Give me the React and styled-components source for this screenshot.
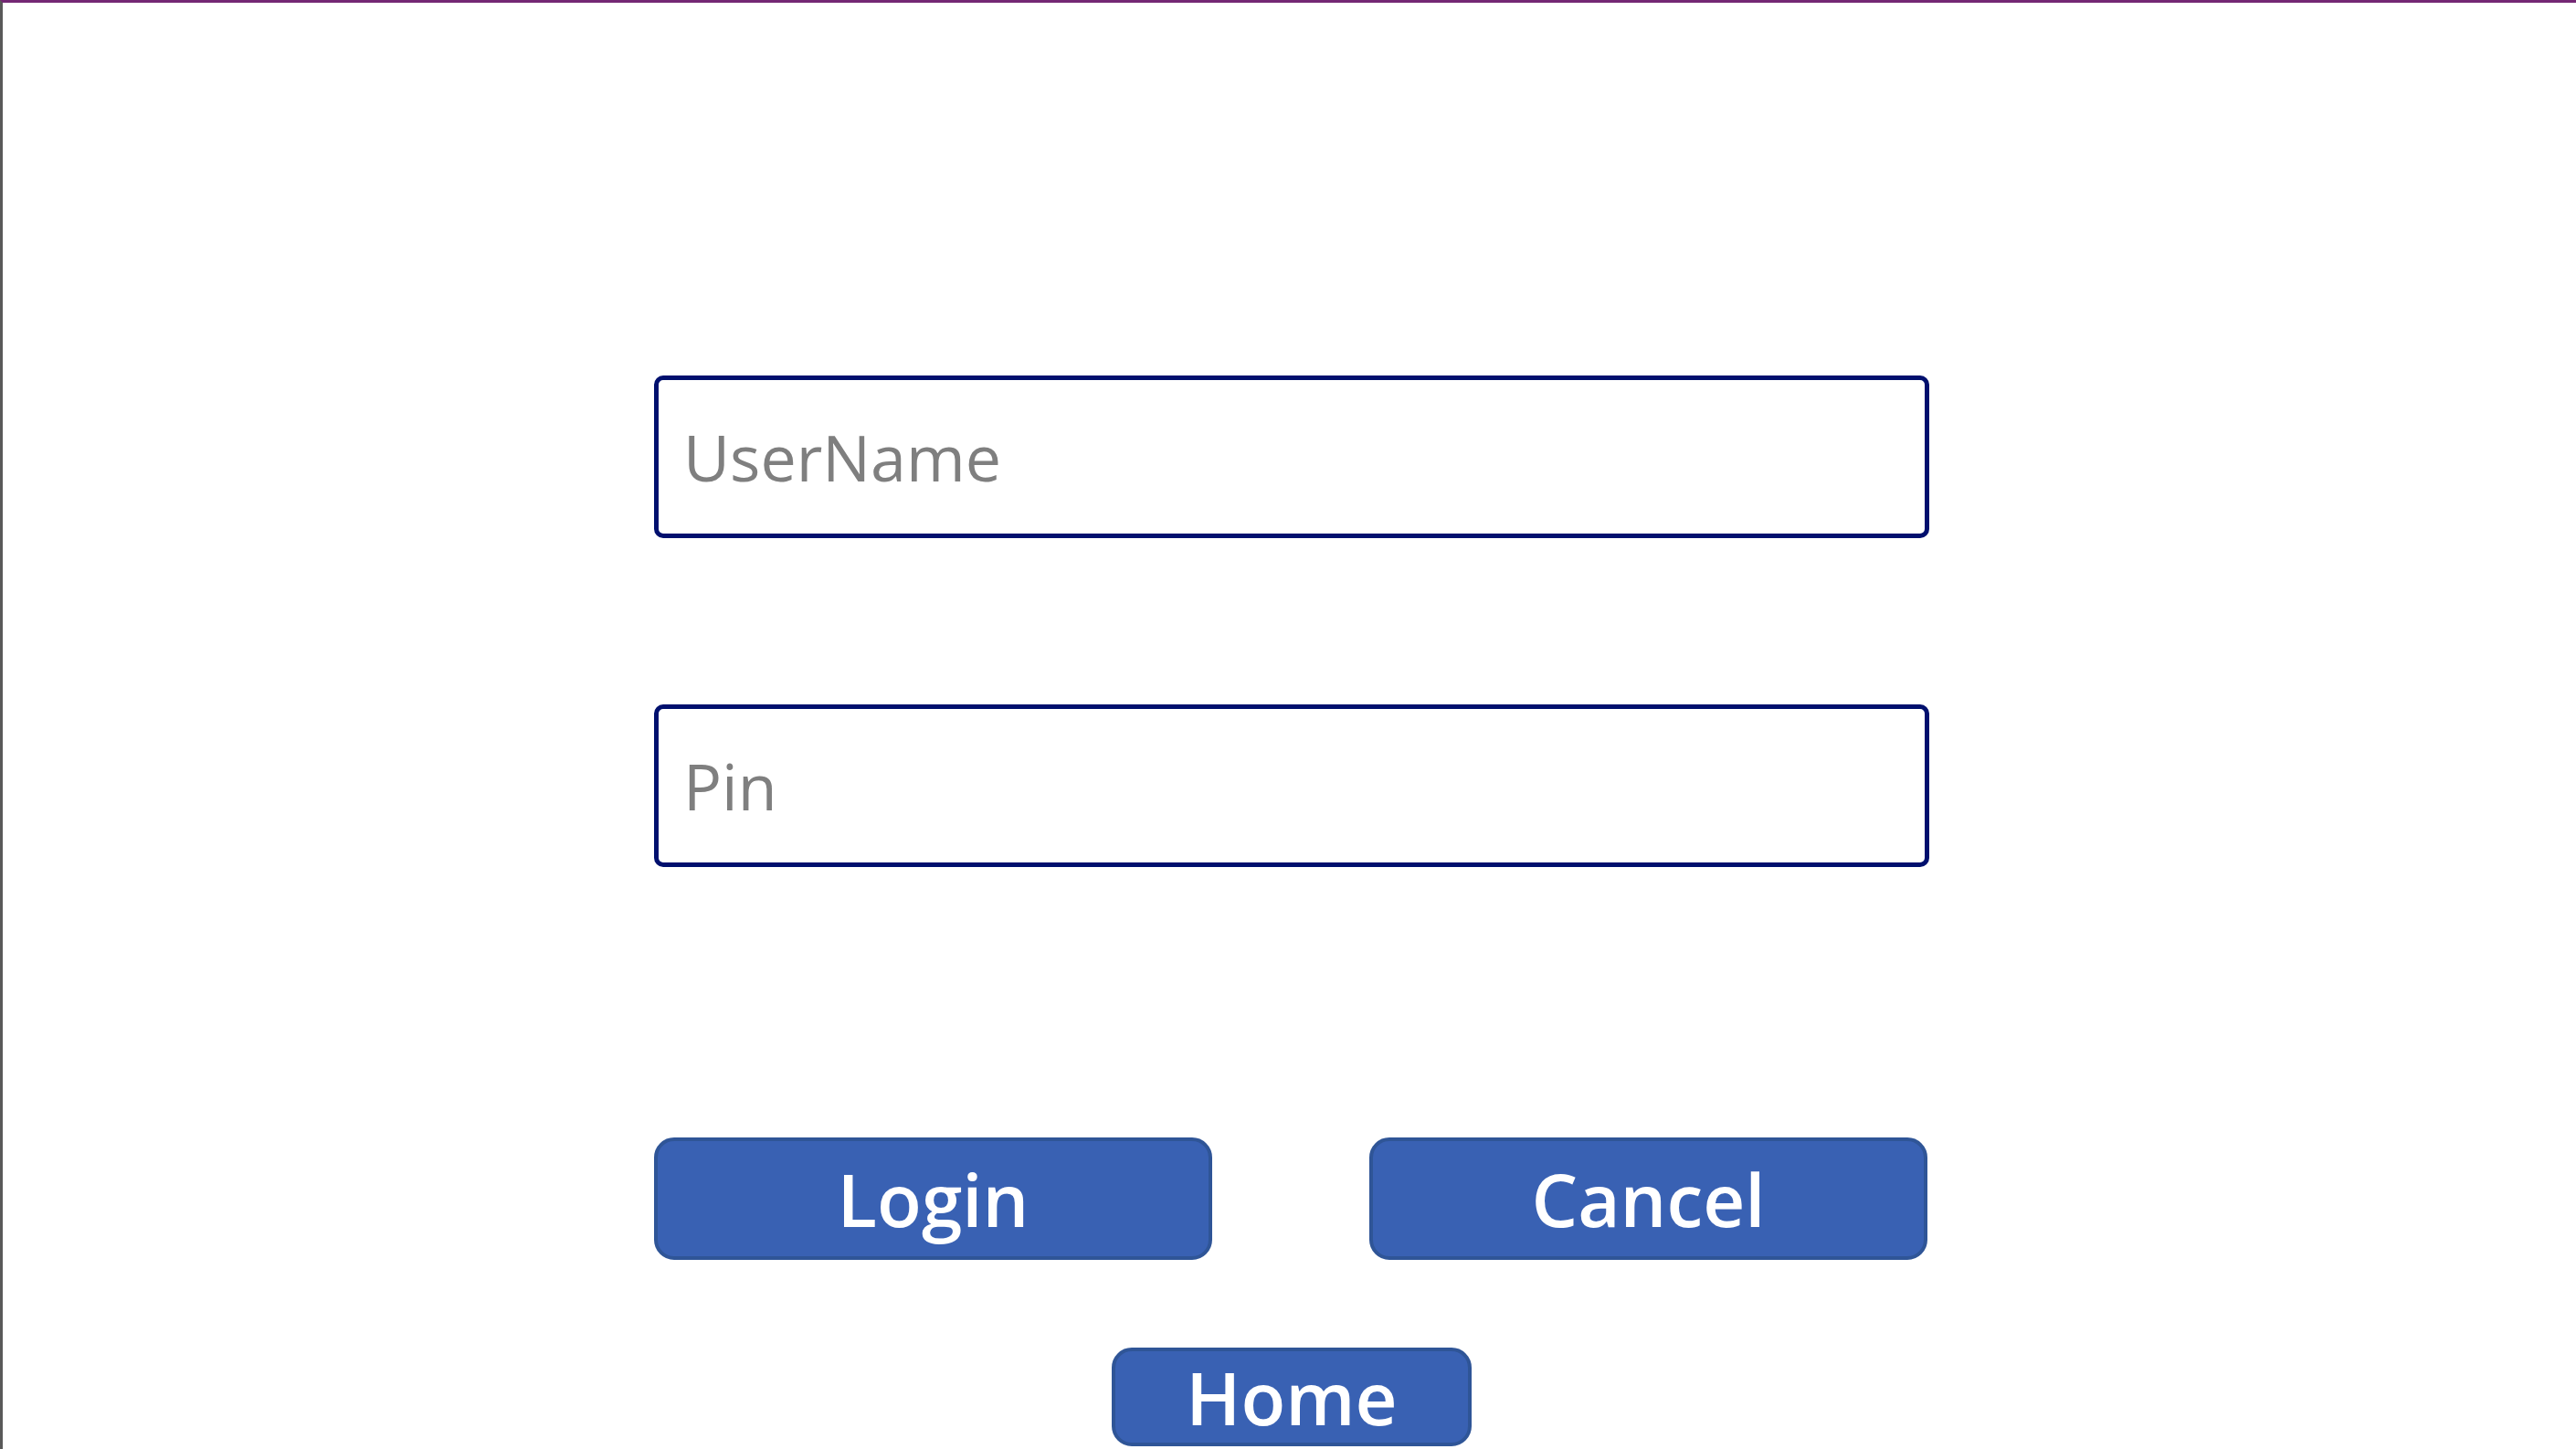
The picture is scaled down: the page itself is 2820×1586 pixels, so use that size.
import React from "react";
import styled, { createGlobalStyle } from "styled-components";

const GlobalStyle = createGlobalStyle`
  html, body {
    margin: 0;
    padding: 0;
    background: #ffffff;
  }
  * {
    box-sizing: border-box;
  }
`;

const Screen = styled.div`
  min-height: 100vh;
  border-top: 3px solid #742774;
  border-left: 3px solid #595959;
  background: #ffffff;
  font-family: "Open Sans", "Noto Sans", sans-serif;
  overflow: hidden;
`;

const Form = styled.form`
  width: 1396px;
  margin-left: 713px;
  padding-top: 408px;
  display: flex;
  flex-direction: column;
`;

const Field = styled.input`
  width: 100%;
  height: 178px;
  margin-bottom: ${(p) => p.$gap || 0}px;
  padding: 0 27px;
  border: 5px solid #00106e;
  border-radius: 10px;
  background: #ffffff;
  font-family: "Open Sans", "Noto Sans", sans-serif;
  font-size: 70px;
  color: #333333;
  outline: none;

  &::placeholder {
    color: #7f7f7f;
    opacity: 1;
  }
`;

const ButtonRow = styled.div`
  display: flex;
  justify-content: space-between;
  padding-right: 2px;
`;

const Btn = styled.button`
  width: ${(p) => p.$width}px;
  height: ${(p) => p.$height}px;
  padding: 0;
  border: 4px solid #2f5597;
  border-radius: 22px;
  background: #3961b3;
  color: #ffffff;
  font-family: "Open Sans", "Noto Sans", sans-serif;
  font-weight: 600;
  font-size: 80px;
  line-height: 1;
  cursor: pointer;
  display: flex;
  align-items: center;
  justify-content: center;
`;

const HomeWrap = styled.div`
  display: flex;
  justify-content: center;
  margin-top: 96px;
`;

export default function App() {
  return (
    <>
      <GlobalStyle />
      <Screen>
        <Form onSubmit={(e) => e.preventDefault()}>
          <Field placeholder="UserName" $gap={182} />
          <Field placeholder="Pin" type="password" $gap={296} />
          <ButtonRow>
            <Btn type="submit" $width={611} $height={134}>
              Login
            </Btn>
            <Btn type="button" $width={611} $height={134}>
              Cancel
            </Btn>
          </ButtonRow>
          <HomeWrap>
            <Btn type="button" $width={394} $height={108}>
              Home
            </Btn>
          </HomeWrap>
        </Form>
      </Screen>
    </>
  );
}
